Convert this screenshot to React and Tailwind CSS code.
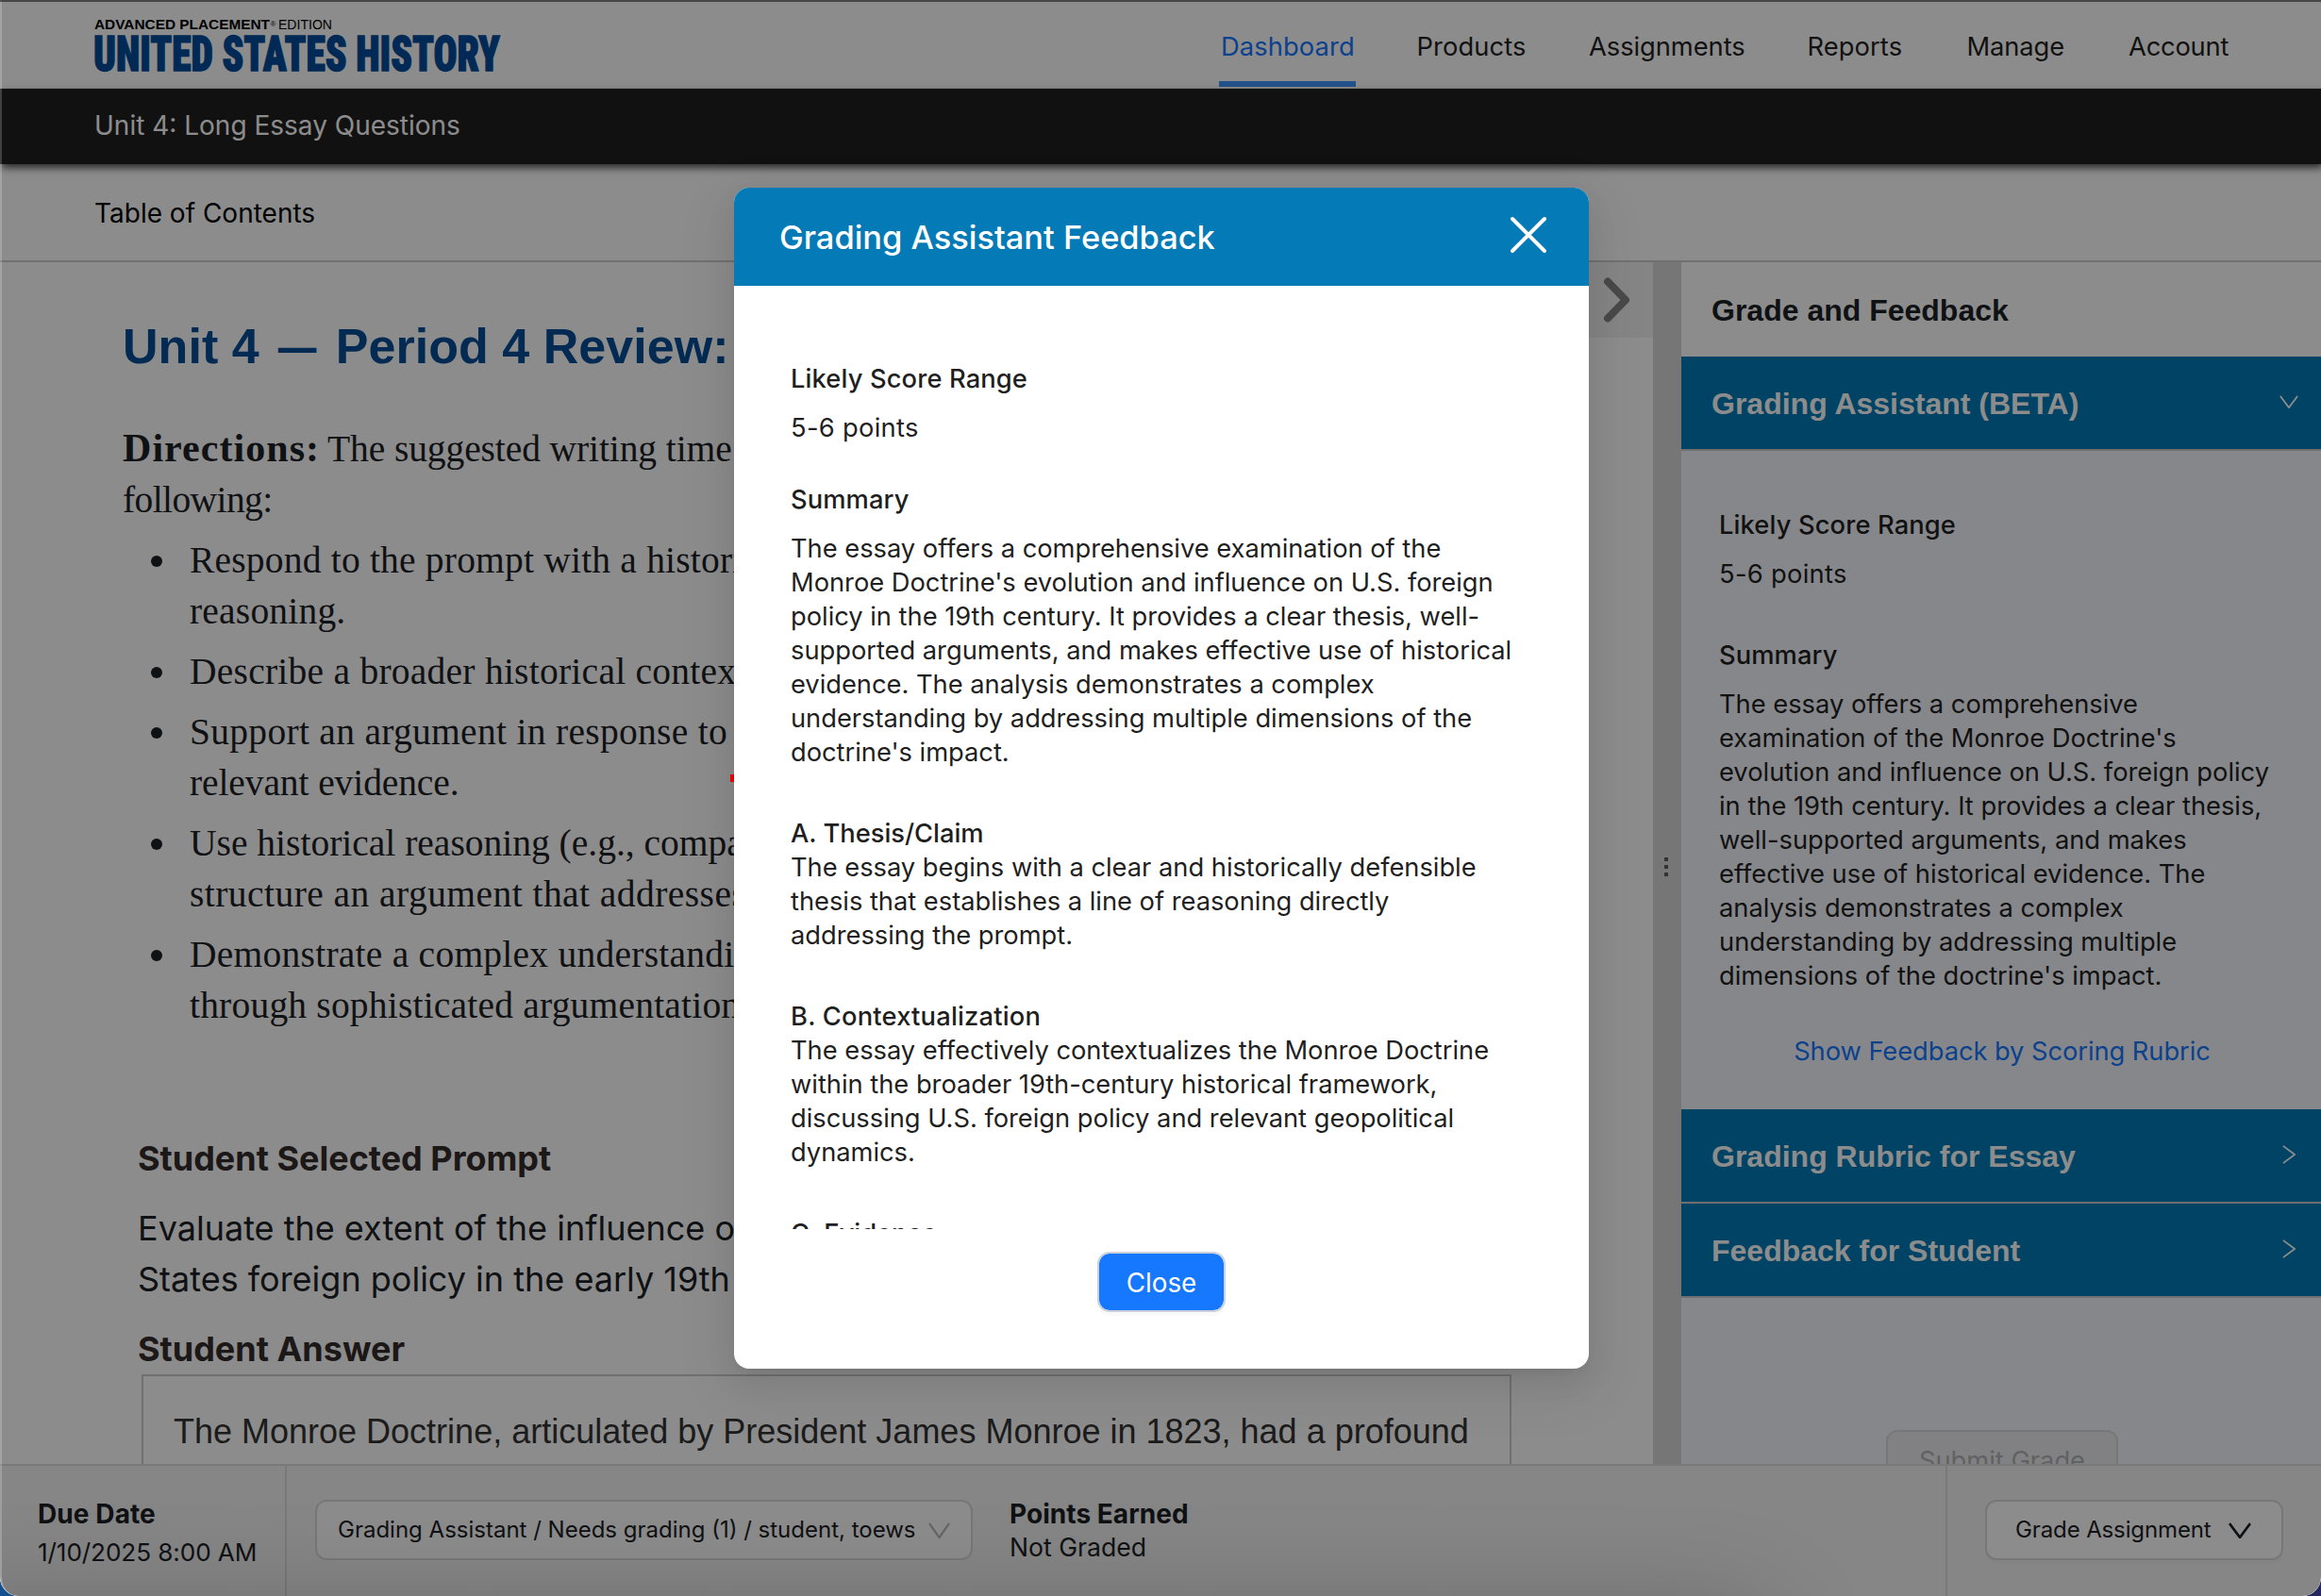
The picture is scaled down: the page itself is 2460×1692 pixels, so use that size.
import React from "react";

const navItems = [
  { label: "Products", cls: "pl-[1.5px] tracking-[0.1px]" },
  { label: "Assignments", cls: "tracking-[-0.05px]" },
  { label: "Reports", cls: "pl-[2.5px] tracking-[0.1px]" },
  { label: "Manage", cls: "pl-[1.5px] tracking-[-0.1px]" },
  { label: "Account", cls: "tracking-[-0.2px]" },
];

function Chevron({ className, direction = "down", weight = 1.6 }) {
  const d = direction === "down" ? "M1 1 L12 15 L23 1" : "M1 1 L15 12 L1 23";
  const box = direction === "down" ? "0 0 24 16" : "0 0 16 24";
  return (
    <svg className={className} viewBox={box} preserveAspectRatio="none" fill="none" stroke="currentColor" strokeWidth={weight} strokeLinejoin="round">
      <path d={d} />
    </svg>
  );
}

function Header() {
  return (
    <header className="flex h-[94px] shrink-0 justify-between bg-white pl-[98px] pr-[94px]">
      <svg className="mt-4 h-[68px] w-[440px]" viewBox="0 0 440 68">
        <text x="2" y="15" fontFamily="Liberation Sans" fontWeight="700" fontSize="15" textLength="186" lengthAdjust="spacingAndGlyphs" fill="#000">ADVANCED PLACEMENT</text>
        <text x="188.500" y="12" fontFamily="Liberation Sans" fontSize="8" fill="#000">®</text>
        <text x="197" y="15" fontFamily="Liberation Sans" fontSize="15" textLength="57" lengthAdjust="spacingAndGlyphs" fill="#000">EDITION</text>
        <text x="1" y="59" fontFamily="Roboto Condensed, Roboto" fontWeight="900" fontSize="52" textLength="431" lengthAdjust="spacingAndGlyphs" fill="#004d9b" stroke="#004d9b" strokeWidth="1.4">UNITED STATES HISTORY</text>
      </svg>
      <nav className="grid grid-cols-[208px_184px_229px_170px_173px_110px] text-[27.3px] text-[#1f1f1f]">
        <a className="relative flex items-center pl-[2px] pt-[7px] tracking-[0.1px] text-[#1677ff]">
          Dashboard
          <span className="absolute left-0 top-[86px] h-[6px] w-[145px] bg-[#4096ff]" />
        </a>
        {navItems.map((n) => (
          <a key={n.label} className={`flex items-center pt-[7px] ${n.cls}`}>{n.label}</a>
        ))}
      </nav>
    </header>
  );
}

function Bullet({ children }) {
  return (
    <li className="flex">
      <span className="ml-[30px] mr-[29px] mt-[22px] size-[12px] shrink-0 rounded-full bg-[#1d2125]" />
      <div className="whitespace-nowrap">{children}</div>
    </li>
  );
}

function Assignment() {
  return (
    <section className="relative w-[1752px] overflow-hidden bg-white">
      <div className="absolute right-0 top-0 flex h-20 w-20 items-center justify-end bg-[#f2f2f2] pr-[23px]">
        <svg className="h-[50px] w-[31px] text-[#868686]" viewBox="0 0 31 50" fill="none" stroke="currentColor" strokeWidth="8" strokeLinecap="round" strokeLinejoin="round">
          <path d="M6 5.500 L25 25 L6 44.500" />
        </svg>
      </div>
      <h1 className="ml-[130px] mt-[59px] font-['Liberation_Sans',sans-serif] text-[52px] font-bold leading-[60px] tracking-[0.04px] text-[#054e95]">
        Unit 4 <span className="inline-block scale-x-[0.78]">—</span> Period 4 Review:
      </h1>
      <div className="ml-[130px] mt-[52px] font-['Liberation_Serif',serif] text-[39.5px] leading-[54px] text-[#1d2125]">
        <p className="whitespace-nowrap">
          <b className="text-[42px] leading-[50px] tracking-[1.05px]">Directions:</b>
          <span className="ml-[8px] tracking-[-0.1px]">The suggested writing time</span>
        </p>
        <p className="tracking-[-0.6px]">following:</p>
        <ul className="mt-[10px] flex flex-col gap-[10px]">
          <Bullet>
            <div className="tracking-[0.2px]">Respond to the prompt with a historically</div>
            <div className="tracking-[0.2px]">reasoning.</div>
          </Bullet>
          <Bullet>
            <div className="tracking-[0.25px]">Describe a broader historical context</div>
          </Bullet>
          <Bullet>
            <div className="tracking-[0.3px]">Support an argument in response to</div>
            <div className="tracking-[-0.1px]">relevant evidence.</div>
          </Bullet>
          <Bullet>
            <div className="tracking-[0px]">Use historical reasoning (e.g., comparison,</div>
            <div className="tracking-[0.45px]">structure an argument that addresses</div>
          </Bullet>
          <Bullet>
            <div className="tracking-[0.25px]">Demonstrate a complex understanding</div>
            <div className="tracking-[0.2px]">through sophisticated argumentation</div>
          </Bullet>
        </ul>
      </div>
      <div className="ml-[146px] mt-[113px] text-[36px]">
        <h2 className="font-bold leading-[44px] text-[#332d2d]">Student Selected Prompt</h2>
        <p className="mt-[25px] leading-[54px] text-[#1d2125]">
          Evaluate the extent of the influence of
          <br />
          States foreign policy in the early 19th
        </p>
        <h2 className="mt-[25px] font-bold leading-[44px] text-[#332d2d]">Student Answer</h2>
        <div className="ml-1 mt-[5px] h-[200px] w-[1452px] border-2 border-[#cccccc] pl-8 pt-8 font-['Liberation_Sans',sans-serif] leading-[54px] text-[#333333]">
          The Monroe Doctrine, articulated by President James Monroe in 1823, had a profound
        </div>
      </div>
    </section>
  );
}

function AccordionHeader({ title, open }) {
  return (
    <div className="flex h-[100px] items-center justify-between border-b-2 border-[#cccccc] bg-[#007ab6] pl-8 pr-6 pt-px font-['Liberation_Sans',sans-serif] text-[32px] font-bold text-white">
      {title}
      {open ? (
        <Chevron className="mb-[3px] h-[14px] w-[20px]" weight={2} />
      ) : (
        <Chevron className="mb-[3px] mr-[3px] h-[20px] w-[14px]" direction="right" weight={2} />
      )}
    </div>
  );
}

function GradePanel() {
  return (
    <aside className="w-[678px] overflow-hidden bg-[#f4f6fd] text-[27.3px] leading-9 text-[#1f1f1f]">
      <h2 className="flex h-[100px] items-center bg-white pl-8 pt-px font-['Liberation_Sans',sans-serif] text-[32px] font-bold text-[#1d2125]">Grade and Feedback</h2>
      <AccordionHeader title="Grading Assistant (BETA)" open />
      <div className="h-[698px] pl-10 pt-[61px]">
        <h3 className="font-medium tracking-[0.13px]">Likely Score Range</h3>
        <p className="mt-4 tracking-[0.3px]">5-6 points</p>
        <h3 className="mt-[50px] font-medium tracking-[0.1px]">Summary</h3>
        <p className="mt-4 tracking-[-0.01px]">
          The essay offers a comprehensive
          <br />
          examination of the Monroe Doctrine's
          <br />
          evolution and influence on U.S. foreign policy
          <br />
          in the 19th century. It provides a clear thesis,
          <br />
          well-supported arguments, and makes
          <br />
          effective use of historical evidence. The
          <br />
          analysis demonstrates a complex
          <br />
          understanding by addressing multiple
          <br />
          dimensions of the doctrine's impact.
        </p>
        <p className="mt-11 pr-[38px] text-center tracking-[-0.06px] text-[#1677ff]">Show Feedback by Scoring Rubric</p>
      </div>
      <AccordionHeader title="Grading Rubric for Essay" />
      <AccordionHeader title="Feedback for Student" />
      <div className="mx-auto mt-[140px] flex h-16 w-[246px] translate-x-px items-center justify-center rounded-xl border-2 border-[#d9d9d9] bg-[#ececee] pt-px text-[#b0b1b4]">Submit Grade</div>
    </aside>
  );
}

function Footer() {
  return (
    <footer className="relative flex h-[140px] shrink-0 border-t-2 border-[#dddddd] bg-[#f4f4f4] text-[#1d2125]">
      <div className="w-[304px] border-r-2 border-[#dddddd] pl-10 pt-[33px] leading-9">
        <div className="text-[28px] font-bold tracking-[0.1px]">Due Date</div>
        <div className="mt-[5px] text-[26.2px] tracking-[-0.12px]">1/10/2025 8:00 AM</div>
      </div>
      <div className="ml-[30px] mt-9 flex h-16 w-[697px] items-center justify-between rounded-xl border-2 border-[#d9d9d9] bg-white pl-[22px] pr-[22px] text-[24px]">
        Grading Assistant / Needs grading (1) / student, toews
        <Chevron className="h-[17px] w-[23px] text-[#b8b8b8]" weight={2.2} />
      </div>
      <div className="ml-[39px] pt-[33px] leading-9">
        <div className="text-[28px] font-bold tracking-[0.05px]">Points Earned</div>
        <div className="-mt-px text-[26.6px]">Not Graded</div>
      </div>
      <div className="ml-auto w-[398px] border-l-2 border-[#dddddd] pl-10 pt-9">
        <div className="flex h-16 w-[316px] items-center justify-between rounded-xl border-2 border-[#d9d9d9] bg-white pl-[30px] pr-8 text-[24px] tracking-[-0.12px] shadow-[0_4px_0_rgba(0,0,0,0.02)]">
          Grade Assignment
          <Chevron className="h-[17px] w-[24px]" weight={2.6} />
        </div>
      </div>
    </footer>
  );
}

function FeedbackModal() {
  return (
    <div className="absolute left-[778px] top-[199px] flex h-[1252px] w-[906px] flex-col overflow-hidden rounded-2xl bg-white text-[27.3px] leading-9 text-[#1f1f1f] shadow-[0_12px_32px_rgba(0,0,0,0.08),0_6px_12px_-8px_rgba(0,0,0,0.12),0_18px_56px_16px_rgba(0,0,0,0.05)]">
      <div className="flex h-[104px] shrink-0 items-center justify-between bg-[#047ab7] pl-12 pr-11 text-[34.4px] font-medium text-white">
        <span className="pt-[2px]">Grading Assistant Feedback</span>
        <svg className="mb-1 size-10" viewBox="0 0 40 40" fill="none" stroke="currentColor" strokeWidth="4" strokeLinecap="round">
          <path d="M3 3 L37 37 M37 3 L3 37" />
        </svg>
      </div>
      <div className="h-[1000px] shrink-0 overflow-hidden whitespace-nowrap pl-[60px] pt-[81px] tracking-[-0.02px]">
        <h3 className="font-medium tracking-[0.13px]">Likely Score Range</h3>
        <p className="mt-4 tracking-[0.3px]">5-6 points</p>
        <h3 className="mt-10 font-medium tracking-[0.1px]">Summary</h3>
        <p className="mt-4">
          The essay offers a comprehensive examination of the
          <br />
          Monroe Doctrine's evolution and influence on U.S. foreign
          <br />
          policy in the 19th century. It provides a clear thesis, well-
          <br />
          supported arguments, and makes effective use of historical
          <br />
          evidence. The analysis demonstrates a complex
          <br />
          understanding by addressing multiple dimensions of the
          <br />
          doctrine's impact.
        </p>
        <h3 className="mt-[50px] font-medium">A. Thesis/Claim</h3>
        <p>
          The essay begins with a clear and historically defensible
          <br />
          thesis that establishes a line of reasoning directly
          <br />
          addressing the prompt.
        </p>
        <h3 className="mt-[50px] font-medium tracking-[0.2px]">B. Contextualization</h3>
        <p>
          The essay effectively contextualizes the Monroe Doctrine
          <br />
          within the broader 19th-century historical framework,
          <br />
          discussing U.S. foreign policy and relevant geopolitical
          <br />
          dynamics.
        </p>
        <h3 className="mt-[50px] font-medium">C. Evidence</h3>
      </div>
      <button className="mx-auto mt-6 flex h-[64px] w-[136px] items-center justify-center rounded-[13px] border-2 border-[#ccd2da] bg-[#1677ff] bg-clip-padding pt-px text-[27.8px] text-white shadow-[0_4px_0_rgba(0,0,0,0.02)]">Close</button>
    </div>
  );
}

export default function App() {
  return (
    <div className="h-[1692px] w-[2460px] overflow-hidden bg-linear-to-r from-[#14508f] to-[#25275c] font-['Inter',sans-serif]">
      <div className="relative flex h-full flex-col overflow-hidden rounded-b-[20px] bg-white">
        <Header />
        <div className="relative z-10 flex h-20 shrink-0 items-center bg-[#1f1f1f] pb-[2px] pl-[100px] text-[28px] text-white shadow-[2px_4px_8px_rgba(0,0,0,0.7)]">Unit 4: Long Essay Questions</div>
        <div className="flex h-[104px] shrink-0 items-center border-b-2 border-[#cccccc] bg-white pl-[100px] pt-[2px] text-[28px] text-black">Table of Contents</div>
        <main className="flex h-[1274px] shrink-0">
          <Assignment />
          <div className="flex w-[30px] flex-col items-center justify-center gap-[4px] bg-[#d8d8d8] pt-[7px]">
            <i className="size-[4px] -translate-x-px bg-[#5c5c5c]" />
            <i className="size-[4px] -translate-x-px bg-[#5c5c5c]" />
            <i className="size-[4px] -translate-x-px bg-[#5c5c5c]" />
          </div>
          <GradePanel />
        </main>
        <Footer />
        <div className="absolute inset-0 z-20 overflow-hidden rounded-b-[20px] border-l-2 border-white/20 bg-black/45">
          <div className="absolute -left-[200px] top-[1720px] h-[100px] w-[2060px] shadow-[0_0_120px_rgba(0,0,0,0.28)]" />
        </div>
        <div className="absolute left-0 top-0 z-20 h-[2px] w-full bg-black/50" />
        <div className="absolute left-[774px] top-[821px] z-20 h-2 w-1 bg-[#f20000]" />
        <div className="absolute inset-0 z-30">
          <FeedbackModal />
        </div>
      </div>
    </div>
  );
}
